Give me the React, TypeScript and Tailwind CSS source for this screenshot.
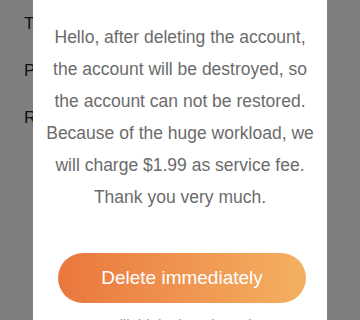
import { useState } from 'react';

const rows = ['Terms of Service', 'Privacy Policy', 'Remove Account'];

const lines = [
  'Hello, after deleting the account,',
  'the account will be destroyed, so',
  'the account can not be restored.',
  'Because of the huge workload, we',
  'will charge $1.99 as service fee.',
  'Thank you very much.',
];

const App = () => {
  const [open] = useState(true);

  return (
    <div className="relative h-[320px] w-[360px] overflow-hidden bg-white font-['Liberation_Sans',Arial,sans-serif]">
      <ul>
        {rows.map((r) => (
          <li key={r} className="flex h-[47px] items-center pl-[24px] text-[17px] text-[#222]">
            {r}
          </li>
        ))}
      </ul>

      {open && (
        <div className="absolute inset-0 bg-black/50">
          <div className="mx-auto flex w-[294px] flex-col items-center bg-white pt-[21px]">
            {lines.map((l) => (
              <div key={l} className="h-[32px] whitespace-nowrap text-center text-[17.5px] leading-[32px] text-[#6b6b6b]">
                {l}
              </div>
            ))}
            <button className="ml-[4px] mt-[40px] h-[50px] w-[248px] rounded-full bg-gradient-to-r from-[#ea773e] to-[#f3b062] text-[19px] text-white">
              Delete immediately
            </button>
            <div className="mt-[12px] text-[15px] leading-[20px] text-[#999]">I will think about it again</div>
          </div>
        </div>
      )}
    </div>
  );
};

export default App;
